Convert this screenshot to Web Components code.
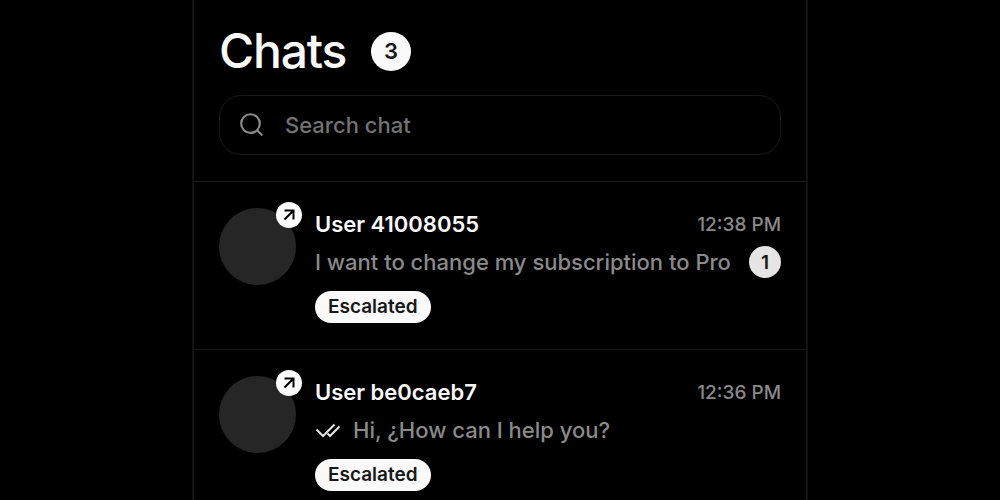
<!DOCTYPE html>
<html lang="en">
<head>
  <meta charset="utf-8">
  <meta name="viewport" content="width=device-width, initial-scale=1">
  <title>Chats</title>
  <style>
    :root {
      --background: #000;
      --foreground: #fafafa;
      --muted: #8a8a8a;
      --border: #1a1a1a;
      --avatar: #262626;
    }
    body {
      margin: 0;
      background: var(--background);
      color: var(--foreground);
      font-family: Inter, "Liberation Sans", sans-serif;
    }
  </style>
</head>
<body>
  <chat-panel>
    <span slot="title">Chats</span>
    <count-badge slot="count" size="large">3</count-badge>
    <chat-search slot="search" placeholder="Search chat"></chat-search>
    <chat-item href="#41008055">
      <span slot="name">User 41008055</span>
      <time slot="time" datetime="12:38">12:38 PM</time>
      I want to change my subscription to Pro
      <count-badge slot="unread">1</count-badge>
      <span slot="status">Escalated</span>
    </chat-item>
    <chat-item href="#be0caeb7" read>
      <span slot="name">User be0caeb7</span>
      <time slot="time" datetime="12:36">12:36 PM</time>
      Hi, ¿How can I help you?
      <span slot="status">Escalated</span>
    </chat-item>
  </chat-panel>

  <script>
    class ChatPanel extends HTMLElement {
      constructor() {
        super();
        this.attachShadow({ mode: 'open' });
        this.shadowRoot.innerHTML = `
          <style>
            :host {
              display: flex;
              flex-direction: column;
              box-sizing: border-box;
              max-width: 616px;
              height: 100vh;
              margin: 0 auto;
              border: solid #131313;
              border-width: 0 2px;
            }
            header {
              display: flex;
              flex-direction: column;
              gap: 14px;
              padding: 21px 25px 26px;
              border-bottom: 1px solid var(--border);
            }
            .heading {
              display: flex;
              align-items: center;
              gap: 25px;
            }
            h1 {
              margin: 0;
              font-size: 48px;
              line-height: 60px;
              font-weight: 500;
              letter-spacing: -0.025em;
            }
            main {
              flex: 1;
              min-height: 0;
              overflow-y: auto;
              scrollbar-width: none;
            }
          </style>
          <header>
            <div class="heading">
              <h1><slot name="title"></slot></h1>
              <slot name="count"></slot>
            </div>
            <slot name="search"></slot>
          </header>
          <main><slot></slot></main>
        `;
      }
    }

    class CountBadge extends HTMLElement {
      constructor() {
        super();
        this.attachShadow({ mode: 'open' });
        this.shadowRoot.innerHTML = `
          <style>
            :host {
              display: flex;
              flex: none;
              align-items: center;
              justify-content: center;
              width: 32px;
              height: 32px;
              border-radius: 50%;
              background: #e5e5e5;
              color: #171717;
              font-size: 19px;
              font-weight: 600;
            }
            :host([size="large"]) {
              width: 40px;
              height: 39px;
              background: var(--foreground);
              font-size: 22px;
            }
          </style>
          <slot></slot>
        `;
      }
    }

    class ChatSearch extends HTMLElement {
      connectedCallback() {
        const placeholder = this.getAttribute('placeholder') || 'Search';
        this.attachShadow({ mode: 'open' });
        this.shadowRoot.innerHTML = `
          <style>
            :host {
              display: block;
            }
            label {
              display: flex;
              align-items: center;
              gap: 20px;
              box-sizing: border-box;
              height: 60px;
              padding: 0 19px;
              border: 1px solid var(--border);
              border-radius: 22px;
              color: var(--muted);
            }
            svg {
              flex: none;
              width: 26px;
              height: 26px;
            }
            input {
              flex: 1;
              min-width: 0;
              padding: 0;
              border: 0;
              outline: 0;
              background: none;
              color: var(--foreground);
              font: inherit;
              font-size: 22px;
              font-weight: 500;
            }
            input::placeholder {
              color: #737373;
              opacity: 1;
            }
          </style>
          <label>
            <svg viewBox="0 0 24 24" fill="none" stroke="currentColor" stroke-width="2" stroke-linecap="round" aria-hidden="true">
              <circle cx="10.6" cy="10.7" r="8.6"/>
              <path d="M16.9 17 20.9 21"/>
            </svg>
            <input type="text" placeholder="${placeholder}" aria-label="${placeholder}">
          </label>
        `;
      }
    }

    class ChatAvatar extends HTMLElement {
      constructor() {
        super();
        this.attachShadow({ mode: 'open' });
        this.shadowRoot.innerHTML = `
          <style>
            :host {
              display: block;
              position: relative;
              flex: none;
              width: 77px;
              height: 77px;
              border-radius: 50%;
              background: var(--avatar);
            }
            .mark {
              display: flex;
              align-items: center;
              justify-content: center;
              position: absolute;
              top: -6px;
              right: -6px;
              width: 26px;
              height: 26px;
              border-radius: 50%;
              background: #fff;
              color: #000;
            }
            svg {
              width: 20px;
              height: 20px;
            }
          </style>
          <span class="mark">
            <svg viewBox="0 0 20 20" fill="none" stroke="currentColor" stroke-width="2" aria-hidden="true">
              <path d="M5.5 5.5h9v9M14.5 5.5l-9 9"/>
            </svg>
          </span>
        `;
      }
    }

    class ChatItem extends HTMLElement {
      connectedCallback() {
        const href = this.getAttribute('href') || '#';
        const checks = this.hasAttribute('read') ? `
          <svg viewBox="0 0 26 20" fill="none" stroke="currentColor" stroke-width="2" role="img" aria-label="Read">
            <path d="M1.5 9.5 8 16 19.5 4.5M12.5 13.5 15 16 24.5 6.5"/>
          </svg>` : '';
        this.attachShadow({ mode: 'open' });
        this.shadowRoot.innerHTML = `
          <style>
            :host {
              display: block;
              border-bottom: 1px solid #121212;
            }
            a {
              display: flex;
              gap: 19px;
              padding: 26px 25px;
              color: inherit;
              text-decoration: none;
            }
            .body {
              display: flex;
              flex: 1;
              flex-direction: column;
              min-width: 0;
            }
            .row {
              display: flex;
              align-items: center;
              justify-content: space-between;
              gap: 12px;
              height: 32px;
            }
            .row + .row {
              margin: 6px 0 13px;
            }
            .name {
              font-size: 22px;
              font-weight: 600;
            }
            .time {
              flex: none;
              color: var(--muted);
              font-size: 19px;
              font-weight: 500;
            }
            .message {
              display: flex;
              align-items: center;
              gap: 12px;
              min-width: 0;
              color: var(--muted);
              font-size: 22px;
              font-weight: 500;
              white-space: nowrap;
            }
            .message svg {
              flex: none;
              width: 26px;
              height: 20px;
              color: #e5e5e5;
            }
            .text {
              overflow: hidden;
              text-overflow: ellipsis;
            }
            .status {
              align-self: flex-start;
              padding: 0 13px;
              border-radius: 16px;
              background: var(--foreground);
              color: #171717;
              font-size: 19px;
              line-height: 32px;
              font-weight: 600;
            }
          </style>
          <a href="${href}">
            <chat-avatar></chat-avatar>
            <div class="body">
              <div class="row">
                <span class="name"><slot name="name"></slot></span>
                <span class="time"><slot name="time"></slot></span>
              </div>
              <div class="row">
                <div class="message">${checks}<span class="text"><slot></slot></span></div>
                <slot name="unread"></slot>
              </div>
              <span class="status"><slot name="status"></slot></span>
            </div>
          </a>
        `;
      }
    }

    customElements.define('chat-panel', ChatPanel);
    customElements.define('count-badge', CountBadge);
    customElements.define('chat-search', ChatSearch);
    customElements.define('chat-avatar', ChatAvatar);
    customElements.define('chat-item', ChatItem);
  </script>
</body>
</html>
